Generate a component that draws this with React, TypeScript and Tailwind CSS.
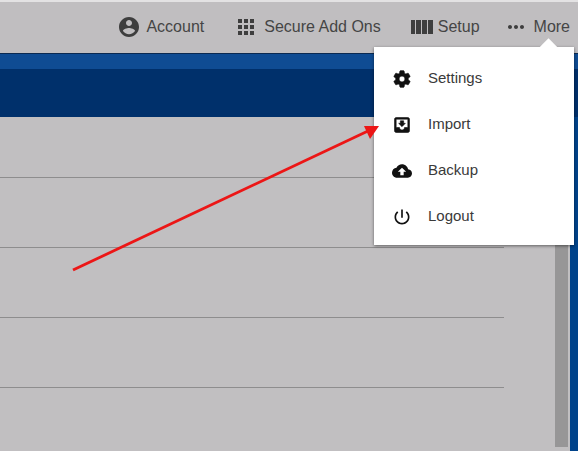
const font = { fontFamily: '"Liberation Sans", Arial, sans-serif' };

function Icon({ d, className, bold = 0 }: { d: string; className: string; bold?: number }) {
  return (
    <svg viewBox="0 0 24 24" fill="currentColor" stroke="currentColor" strokeWidth={bold} className={className}>
      <path d={d} />
    </svg>
  );
}

const icons = {
  account:
    "M12 2C6.48 2 2 6.48 2 12s4.48 10 10 10 10-4.48 10-10S17.52 2 12 2zm0 3c1.66 0 3 1.34 3 3s-1.34 3-3 3-3-1.34-3-3 1.34-3 3-3zm0 14.2c-2.5 0-4.71-1.28-6-3.22.03-1.99 4-3.08 6-3.08 1.99 0 5.97 1.09 6 3.08-1.29 1.94-3.5 3.22-6 3.22z",
  apps:
    "M4 8h4V4H4v4zm6 12h4v-4h-4v4zm-6 0h4v-4H4v4zm0-6h4v-4H4v4zm6 0h4v-4h-4v4zm6-10v4h4V4h-4zm-6 4h4V4h-4v4zm6 6h4v-4h-4v4zm0 6h4v-4h-4v4z",
  more:
    "M6 10c-1.1 0-2 .9-2 2s.9 2 2 2 2-.9 2-2-.9-2-2-2zm12 0c-1.1 0-2 .9-2 2s.9 2 2 2 2-.9 2-2-.9-2-2-2zm-6 0c-1.1 0-2 .9-2 2s.9 2 2 2 2-.9 2-2-.9-2-2-2z",
  settings:
    "M19.43 12.98c.04-.32.07-.64.07-.98s-.03-.66-.07-.98l2.11-1.65c.19-.15.24-.42.12-.64l-2-3.46c-.12-.22-.39-.3-.61-.22l-2.49 1c-.52-.4-1.08-.73-1.69-.98l-.38-2.65C14.46 2.18 14.25 2 14 2h-4c-.25 0-.46.18-.49.42l-.38 2.65c-.61.25-1.17.59-1.69.98l-2.49-1c-.23-.09-.49 0-.61.22l-2 3.46c-.13.22-.07.49.12.64l2.11 1.65c-.04.32-.07.65-.07.98s.03.66.07.98l-2.11 1.65c-.19.15-.24.42-.12.64l2 3.46c.12.22.39.3.61.22l2.49-1c.52.4 1.08.73 1.69.98l.38 2.65c.03.24.24.42.49.42h4c.25 0 .46-.18.49-.42l.38-2.65c.61-.25 1.17-.59 1.69-.98l2.49 1c.23.09.49 0 .61-.22l2-3.46c.12-.22.07-.49-.12-.64l-2.11-1.65zM12 15.5c-1.93 0-3.5-1.57-3.5-3.5s1.57-3.5 3.5-3.5 3.5 1.57 3.5 3.5-1.57 3.5-3.5 3.5z",
  inbox:
    "M19 3H5c-1.1 0-2 .9-2 2v14c0 1.1.9 2 2 2h14c1.1 0 2-.9 2-2V5c0-1.1-.9-2-2-2zm0 12h-4c0 1.66-1.35 3-3 3s-3-1.34-3-3H5V5h14v10zm-3-5h-2V7h-4v3H8l4 4 4-4z",
  backup:
    "M19.35 10.04C18.67 6.59 15.64 4 12 4 9.11 4 6.6 5.64 5.35 8.04 2.34 8.36 0 10.91 0 14c0 3.31 2.69 6 6 6h13c2.76 0 5-2.24 5-5 0-2.64-2.05-4.78-4.65-4.96zM14 13v4h-4v-4H7l5-5 5 5h-3z",
  power:
    "M13 3h-2v10h2V3zm4.83 2.17l-1.42 1.42C17.99 7.86 19 9.81 19 12c0 3.87-3.13 7-7 7s-7-3.13-7-7c0-2.19 1.01-4.14 2.58-5.42L6.17 5.17C4.23 6.82 3 9.26 3 12c0 4.97 4.03 9 9 9s9-4.03 9-9c0-2.74-1.23-5.18-3.17-6.83z",
};

const menuItems = [
  { label: "Settings", icon: icons.settings, bold: 0.8 },
  { label: "Import", icon: icons.inbox, bold: 0.7 },
  { label: "Backup", icon: icons.backup, bold: 0 },
  { label: "Logout", icon: icons.power, bold: 0 },
];

function ViewWeek() {
  return (
    <span className="flex h-[14px] w-[22px] gap-[1px]">
      <span className="flex-1 bg-[#3e3e3e]" />
      <span className="flex-1 bg-[#3e3e3e]" />
      <span className="flex-1 bg-[#3e3e3e]" />
      <span className="flex-1 bg-[#3e3e3e]" />
    </span>
  );
}

export default function App() {
  return (
    <div
      style={font}
      className="relative h-[451px] w-[578px] overflow-hidden bg-[#c1bfc1]"
    >
      <header className="flex h-[54px] items-center justify-end border-t-2 border-b border-t-[#e3e2e3] border-b-[#0b2a52] bg-[#c0bec0] pr-2 pb-[1px] text-base text-[#454545]">
        <div className="flex items-center gap-[5px]">
          <Icon d={icons.account} className="h-6 w-6 text-[#3e3e3e]" />
          <span>Account</span>
        </div>
        <div className="ml-[30px] flex items-center gap-[6px]">
          <Icon d={icons.apps} className="h-6 w-6 text-[#3e3e3e]" />
          <span>Secure Add Ons</span>
        </div>
        <div className="ml-[30px] flex items-center gap-[5px]">
          <ViewWeek />
          <span>Setup</span>
        </div>
        <div className="ml-[24px] flex items-center gap-[6px]">
          <Icon d={icons.more} className="h-6 w-6 text-[#3e3e3e]" />
          <span>More</span>
        </div>
      </header>

      <div className="h-[15px] bg-[#0f4c93]" />
      <div className="h-[48px] bg-[#00306b]" />

      <div className="flex h-[334px]">
        <div className="w-[504px]">
          <div className="h-[61px] border-b border-[#8e8d8e]" />
          <div className="h-[70px] border-b border-[#8e8d8e]" />
          <div className="h-[70px] border-b border-[#8e8d8e]" />
          <div className="h-[70px] border-b border-[#8e8d8e]" />
        </div>
        <div className="ml-[51px] mb-[4px] w-[13px] bg-[#979697]" />
        <div className="ml-[2px] w-2 bg-[#00438a]" />
      </div>

      <div className="absolute top-[47px] left-[374px] w-[200px] bg-white pt-2 pb-[6px] shadow-[0_1px_3px_rgba(0,0,0,0.5)]">
        <div className="absolute -top-[6px] left-[168px] h-[13px] w-[13px] rotate-45 bg-white" />
        <ul className="relative">
          {menuItems.map((item) => (
            <li key={item.label} className="flex h-[46px] items-center pt-[1px] pl-[18px] text-[15px] text-[#3a3a3a]">
              <Icon d={item.icon} bold={item.bold} className="h-5 w-5 text-[#111]" />
              <span className="ml-[16px]">{item.label}</span>
            </li>
          ))}
        </ul>
      </div>

      <svg className="absolute inset-0 h-full w-full" viewBox="0 0 578 451">
        <line x1="73" y1="270" x2="368" y2="131" stroke="#ec1616" strokeWidth="2.8" />
        <polygon points="379,126 364,126 370,139" fill="#ec1616" />
      </svg>
    </div>
  );
}
